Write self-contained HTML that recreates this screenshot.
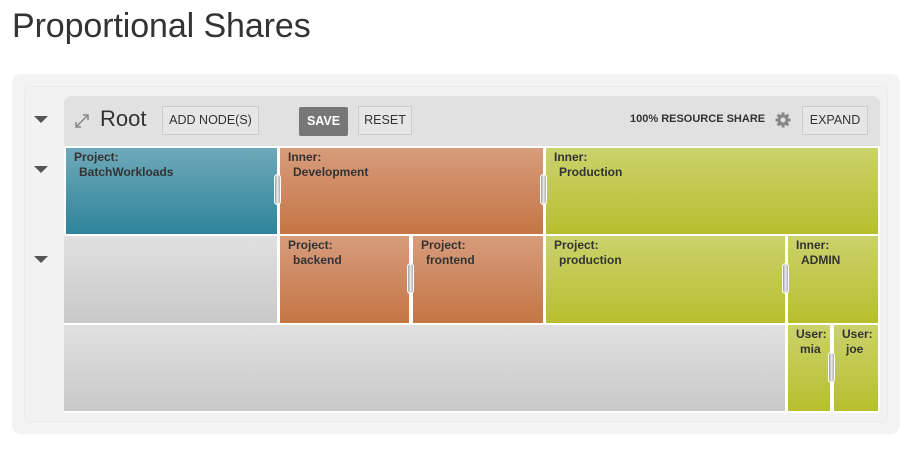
<!DOCTYPE html>
<html><head><meta charset="utf-8"><style>
*{margin:0;padding:0;box-sizing:border-box}
body{width:909px;height:468px;background:#fff;font-family:"Liberation Sans",sans-serif;position:relative;overflow:hidden;color:#333}
.a{position:absolute}
h1{position:absolute;left:12px;top:7px;font-size:34px;font-weight:normal;color:#333;letter-spacing:-0.1px}
.outer{left:12px;top:74px;width:888px;height:360px;background:#f3f3f3;border-radius:9px}
.inner{left:24px;top:86px;width:864px;height:336px;background:#f2f2f2;border:1px solid #ebebeb;border-radius:7px}
.head{left:64px;top:96px;width:816px;height:50px;background:#e1e1e1;border-radius:8px 8px 0 0}
.btn{position:absolute;height:29px;border:1px solid #ccc;font-size:12.5px;color:#333;text-align:center;line-height:27px;background:#e6e6e6}
.tri{position:absolute;left:34px;width:0;height:0;border-left:7px solid transparent;border-right:7px solid transparent;border-top:7px solid #555}
.c{position:absolute;font-size:12px;font-weight:bold;color:#333;padding:2px 0 0 8px;line-height:15px}
.c span{display:block;padding-left:5px}
.t{background:linear-gradient(#6ea9b9,#2f849b)}
.o{background:linear-gradient(#d79c7c,#c57545)}
.g{background:linear-gradient(#cbd26c,#b7bf2e)}
.gr{background:linear-gradient(#e0e0e0,#c9c9c9)}
.h{position:absolute;width:7px;height:31px;border-radius:4px;background:linear-gradient(90deg,#999,#eee,#aaa);border:1px solid #fff}
</style></head><body>
<h1>Proportional Shares</h1>
<div class="a outer"></div>
<div class="a inner"></div>
<div class="a" style="left:64px;top:146px;width:816px;height:267px;background:#fff"></div>
<div class="a head"></div>
<div class="tri" style="top:116px"></div>
<div class="tri" style="top:166px"></div>
<div class="tri" style="top:256px"></div>
<svg class="a" style="left:74px;top:113px" width="16" height="16" viewBox="0 0 16 16"><path d="M2 14L14 2M9 2h5v5M2 9v5h5" stroke="#888" stroke-width="1.5" fill="none"/></svg>
<div class="a" style="left:100px;top:106px;font-size:22px;color:#333">Root</div>
<div class="btn" style="left:162px;top:106px;width:97px">ADD NODE(S)</div>
<div class="btn" style="left:299px;top:107px;width:49px;background:#777;border-color:#777;color:#fff;font-weight:bold;border-radius:2px">SAVE</div>
<div class="btn" style="left:358px;top:106px;width:54px">RESET</div>
<div class="a" style="left:630px;top:113px;font-size:11px;font-weight:bold;color:#333;letter-spacing:0">100% RESOURCE SHARE</div>
<svg class="a" style="left:775px;top:112px" width="16" height="16" viewBox="0 0 16 16"><g fill="#888"><circle cx="8" cy="8" r="5.5"/><rect x="6.5" y="0.5" width="3" height="15"/><rect x="0.5" y="6.5" width="15" height="3"/><rect x="6.5" y="0.5" width="3" height="15" transform="rotate(45 8 8)"/><rect x="6.5" y="0.5" width="3" height="15" transform="rotate(-45 8 8)"/></g><circle cx="8" cy="8" r="2.5" fill="#e1e1e1"/></svg>
<div class="btn" style="left:802px;top:106px;width:66px">EXPAND</div>

<div class="c t" style="left:66px;top:148px;width:211px;height:86px">Project:<span>BatchWorkloads</span></div>
<div class="c o" style="left:280px;top:148px;width:263px;height:86px">Inner:<span>Development</span></div>
<div class="c g" style="left:546px;top:148px;width:332px;height:86px">Inner:<span>Production</span></div>

<div class="c gr" style="left:64px;top:236px;width:213px;height:87px"></div>
<div class="c o" style="left:280px;top:236px;width:129px;height:87px">Project:<span>backend</span></div>
<div class="c o" style="left:413px;top:236px;width:130px;height:87px">Project:<span>frontend</span></div>
<div class="c g" style="left:546px;top:236px;width:239px;height:87px">Project:<span>production</span></div>
<div class="c g" style="left:788px;top:236px;width:90px;height:87px">Inner:<span>ADMIN</span></div>

<div class="c gr" style="left:64px;top:325px;width:721px;height:86px"></div>
<div class="c g" style="left:788px;top:325px;width:42px;height:86px;padding-left:8px">User:<span style="padding-left:4px">mia</span></div>
<div class="c g" style="left:834px;top:325px;width:44px;height:86px;padding-left:8px">User:<span style="padding-left:4px">joe</span></div>

<div class="h" style="left:274px;top:174px"></div>
<div class="h" style="left:540px;top:174px"></div>
<div class="h" style="left:407px;top:263px"></div>
<div class="h" style="left:782px;top:263px"></div>
<div class="h" style="left:828px;top:352px"></div>
</body></html>
